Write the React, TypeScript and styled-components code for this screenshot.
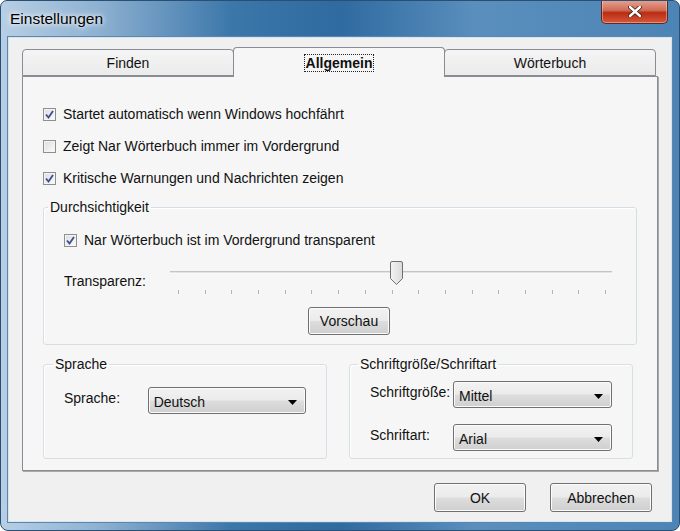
import { createGlobalStyle } from 'styled-components';
import styled from 'styled-components';

const GlobalStyle = createGlobalStyle`
  html, body {
    margin: 0;
    padding: 0;
    background: #ffffff;
  }
  body {
    font-family: 'Liberation Sans', Arial, sans-serif;
    font-size: 14px;
    color: #111;
  }
`;

const Window = styled.div`
  width: 680px;
  height: 531px;
  box-sizing: border-box;
  border-radius: 7px 7px 8px 8px;
  border: 1px solid #2b4f73;
  background: linear-gradient(90deg, #b7cfe4 0%, #8fb2d2 14%, #3c77aa 34%, #2f6aa0 50%, #5a8fbd 70%, #4c84b6 100%);
  display: flex;
  flex-direction: column;
  overflow: hidden;
`;

const TitleBar = styled.div`
  height: 36px;
  display: flex;
  align-items: flex-start;
  justify-content: space-between;
  padding-left: 9px;
  padding-right: 11px;
`;

const Title = styled.span`
  margin-top: 9px;
  font-size: 15.5px;
  color: #000;
  text-shadow: 0 0 8px #ffffff, 0 0 4px #ffffff;
`;

const CloseButton = styled.div`
  width: 65px;
  height: 23px;
  margin-top: -1px;
  border: 1px solid #5a2a24;
  border-top: none;
  border-radius: 0 0 5px 5px;
  background: linear-gradient(180deg, #e5a493 0%, #d06b55 45%, #b92d14 55%, #d8573a 100%);
  box-shadow: inset 0 0 0 1px rgba(255, 255, 255, 0.35);
  display: flex;
  align-items: center;
  justify-content: center;
`;

const Client = styled.div`
  flex: 1;
  margin: 0 7px 8px 7px;
  border: 1px solid #d9e4ee;
  box-shadow: 0 0 0 1px #5b87ae;
  background: #f0f0f0;
  display: flex;
  flex-direction: column;
  padding: 10px 13px 0 13px;
`;

const TabStrip = styled.div`
  display: flex;
  height: 28px;
  align-items: flex-end;
`;

const Tab = styled.div<{ selected?: boolean }>`
  width: 212px;
  height: ${(p) => (p.selected ? '30px' : '27px')};
  box-sizing: border-box;
  border: 1px solid #898c95;
  border-bottom: ${(p) => (p.selected ? 'none' : '1px solid #898c95')};
  border-radius: 4px 4px 0 0;
  background: ${(p) => (p.selected ? '#f6f6f6' : 'linear-gradient(180deg, #f4f4f4 0%, #ebebeb 100%)')};
  display: flex;
  align-items: center;
  justify-content: center;
  margin-left: ${(p) => (p.selected ? '-1px' : '0')};
  margin-right: ${(p) => (p.selected ? '-1px' : '0')};
  position: relative;
  z-index: ${(p) => (p.selected ? 1 : 0)};
  margin-bottom: ${(p) => (p.selected ? '-1px' : '0')};
  font-weight: ${(p) => (p.selected ? 'bold' : 'normal')};
`;

const FocusLabel = styled.span`
  outline: 1px dotted #222;
  padding: 0 1px;
`;

const Panel = styled.div`
  height: 395px;
  box-sizing: border-box;
  border: 1px solid #898c95;
  box-shadow: 1px 1px 0 #a9a9a9;
  background: #f6f6f6;
  padding: 21px 20px 0 20px;
  display: flex;
  flex-direction: column;
`;

const CheckRow = styled.label`
  height: 32px;
  display: flex;
  align-items: center;
  gap: 7px;
`;

const Box = styled.span`
  width: 11px;
  height: 11px;
  border: 1px solid #8e8f8f;
  background: linear-gradient(135deg, #dcdcdc 0%, #f6f6f6 80%);
  box-shadow: inset 0 0 0 1px #f4f4f4;
  display: flex;
  align-items: center;
  justify-content: center;
  flex-shrink: 0;
`;

const Group = styled.fieldset<{ legendOffset: number }>`
  margin: 0;
  border: 1px solid #d5dfe5;
  border-radius: 3px;
  box-shadow: inset 1px 1px 0 #ffffff;
  padding: 0 20px;
  min-width: 0;
  & > legend {
    margin-left: ${(p) => p.legendOffset}px;
    padding: 0 2px;
    line-height: 16px;
  }
`;

const TransGroup = styled(Group)`
  margin-top: 5px;
  height: 146px;
  box-sizing: border-box;
  padding-top: 9px;
`;

const SliderRow = styled.div`
  display: flex;
  height: 46px;
`;

const SliderLabel = styled.span`
  width: 106px;
  padding-top: 17px;
`;

const Slider = styled.div`
  position: relative;
  width: 442px;
`;

const Track = styled.div`
  margin-top: 15px;
  height: 1px;
  border-top: 1px solid #c4c4c4;
  border-bottom: 1px solid #f9f9f9;
  background: #e3e3e3;
`;

const Ticks = styled.div`
  display: flex;
  justify-content: space-between;
  margin: 16px 6px 0 8px;
`;

const Tick = styled.span`
  width: 1px;
  height: 4px;
  background: #b4b4b4;
`;

const Thumb = styled.svg`
  position: absolute;
  top: 5px;
  left: 220px;
`;

const ButtonRow = styled.div<{ align?: string; shift?: number; mt?: number }>`
  display: flex;
  justify-content: ${(p) => p.align || 'center'};
  gap: 24px;
  padding-left: ${(p) => p.shift || 0}px;
  margin-top: ${(p) => p.mt || 0}px;
`;

const Button = styled.div<{ w: number; h?: number }>`
  width: ${(p) => p.w}px;
  height: ${(p) => p.h || 29}px;
  box-sizing: border-box;
  border: 1px solid #707070;
  border-radius: 3px;
  background: linear-gradient(180deg, #f2f2f2 0%, #ebebeb 48%, #dddddd 52%, #cfcfcf 100%);
  box-shadow: inset 0 0 0 1px #fcfcfc;
  display: flex;
  align-items: center;
  justify-content: center;
`;

const BottomGroups = styled.div`
  margin-top: 11px;
  display: grid;
  grid-template-columns: 284px 284px;
  column-gap: 22px;
`;

const SmallGroup = styled(Group)`
  height: 103px;
  box-sizing: border-box;
`;

const FieldRow = styled.div<{ labelWidth: number; mt: number }>`
  display: flex;
  align-items: center;
  margin-top: ${(p) => p.mt}px;
  & > span:first-child {
    width: ${(p) => p.labelWidth}px;
    margin-top: -6px;
  }
`;

const Combo = styled.div`
  width: 159px;
  height: 27px;
  box-sizing: border-box;
  border: 1px solid #707070;
  border-radius: 3px;
  background: linear-gradient(180deg, #f2f2f2 0%, #ebebeb 48%, #dddddd 52%, #cfcfcf 100%);
  box-shadow: inset 0 0 0 1px #fbfbfb;
  display: flex;
  align-items: center;
  justify-content: space-between;
  padding: 3px 8px 0 5px;
`;

const Footer = styled.div`
  padding: 12px 6px 0 0;
`;

function CheckBox({ checked }: { checked?: boolean }) {
  return (
    <Box>
      {checked && (
        <svg width="9" height="9" viewBox="0 0 9 9">
          <path d="M1 4.5 L3.5 7.5 L8 1" fill="none" stroke="#3a4f8f" strokeWidth="1.8" />
        </svg>
      )}
    </Box>
  );
}

function Arrow() {
  return (
    <svg width="9" height="5" viewBox="0 0 9 5">
      <path d="M0 0 H9 L4.5 5 Z" fill="#000" />
    </svg>
  );
}

export default function App() {
  const ticks = Array.from({ length: 17 });
  return (
    <>
      <GlobalStyle />
      <Window>
        <TitleBar>
          <Title>Einstellungen</Title>
          <CloseButton>
            <svg width="14" height="11" viewBox="0 0 14 11">
              <path d="M2 1 L12 10 M12 1 L2 10" stroke="#3b1a14" strokeWidth="4" strokeLinecap="round" />
              <path d="M2 1 L12 10 M12 1 L2 10" stroke="#ffffff" strokeWidth="2.4" strokeLinecap="round" />
            </svg>
          </CloseButton>
        </TitleBar>
        <Client>
          <TabStrip>
            <Tab>Finden</Tab>
            <Tab selected>
              <FocusLabel>Allgemein</FocusLabel>
            </Tab>
            <Tab>Wörterbuch</Tab>
          </TabStrip>
          <Panel>
            <CheckRow>
              <CheckBox checked />
              Startet automatisch wenn Windows hochfährt
            </CheckRow>
            <CheckRow>
              <CheckBox />
              Zeigt Nar Wörterbuch immer im Vordergrund
            </CheckRow>
            <CheckRow>
              <CheckBox checked />
              Kritische Warnungen und Nachrichten zeigen
            </CheckRow>
            <TransGroup legendOffset={-16}>
              <legend>Durchsichtigkeit</legend>
              <CheckRow>
                <CheckBox checked />
                Nar Wörterbuch ist im Vordergrund transparent
              </CheckRow>
              <SliderRow>
                <SliderLabel>Transparenz:</SliderLabel>
                <Slider>
                  <Track />
                  <Ticks>
                    {ticks.map((_, i) => (
                      <Tick key={i} />
                    ))}
                  </Ticks>
                  <Thumb width="13" height="24" viewBox="0 0 13 24">
                    <defs>
                      <linearGradient id="tg" x1="0" x2="1" y1="0" y2="0">
                        <stop offset="0" stopColor="#f4f4f4" />
                        <stop offset="1" stopColor="#d9d9d9" />
                      </linearGradient>
                    </defs>
                    <path
                      d="M2 0.5 H11 Q12.5 0.5 12.5 2 V17.5 L6.5 23.5 L0.5 17.5 V2 Q0.5 0.5 2 0.5 Z"
                      fill="url(#tg)"
                      stroke="#707070"
                    />
                  </Thumb>
                </Slider>
              </SliderRow>
              <ButtonRow shift={18} mt={5}>
                <Button w={82} h={28}>Vorschau</Button>
              </ButtonRow>
            </TransGroup>
            <BottomGroups>
              <SmallGroup legendOffset={-11}>
                <legend>Sprache</legend>
                <FieldRow labelWidth={84} mt={15}>
                  <span>Sprache:</span>
                  <Combo>
                    Deutsch
                    <Arrow />
                  </Combo>
                </FieldRow>
              </SmallGroup>
              <SmallGroup legendOffset={-12}>
                <legend>Schriftgröße/Schriftart</legend>
                <FieldRow labelWidth={83} mt={9}>
                  <span>Schriftgröße:</span>
                  <Combo>
                    Mittel
                    <Arrow />
                  </Combo>
                </FieldRow>
                <FieldRow labelWidth={83} mt={16}>
                  <span>Schriftart:</span>
                  <Combo>
                    Arial
                    <Arrow />
                  </Combo>
                </FieldRow>
              </SmallGroup>
            </BottomGroups>
          </Panel>
          <Footer>
            <ButtonRow align="flex-end">
              <Button w={92}>OK</Button>
              <Button w={102}>Abbrechen</Button>
            </ButtonRow>
          </Footer>
        </Client>
      </Window>
    </>
  );
}
